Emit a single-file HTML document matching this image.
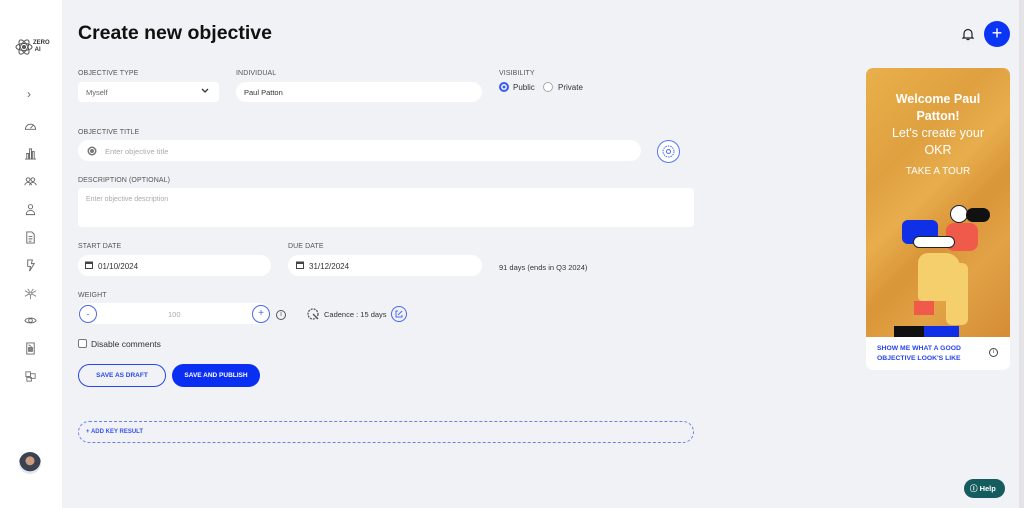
<!DOCTYPE html>
<html><head><meta charset="utf-8"><style>
*{margin:0;padding:0;box-sizing:border-box}
body{width:1024px;height:508px;overflow:hidden;background:#f1f2f5;font-family:"Liberation Sans",sans-serif;position:relative;color:#333}
.a{position:absolute}
.side{left:0;top:0;width:62px;height:508px;background:#fff}
.lbl{font-size:7px;color:#555;letter-spacing:.1px}
.box{background:#fff;border-radius:11px}
.t{font-size:8px;color:#333}
.ph{font-size:7.5px;color:#aaa}
.ic{position:absolute;left:24px;width:13px;height:13px}
</style></head><body>
<div class="a side">
  <svg class="a" style="left:15px;top:38px" width="18" height="18" viewBox="0 0 18 18" fill="none" stroke="#555" stroke-width="1"><ellipse cx="9" cy="9" rx="8" ry="3.5"/><ellipse cx="9" cy="9" rx="8" ry="3.5" transform="rotate(60 9 9)"/><ellipse cx="9" cy="9" rx="8" ry="3.5" transform="rotate(-60 9 9)"/><circle cx="9" cy="9" r="1.5" fill="#555"/></svg>
  <div class="a" style="left:33px;top:40px;font-size:6px;font-weight:bold;line-height:7px;color:#333">ZERO<br>&nbsp;AI</div>
  <div class="a" style="left:27px;top:87px;font-size:12px;color:#666">›</div>
  <svg class="ic" style="top:120px" viewBox="0 0 14 14" fill="none" stroke="#666"><path d="M1.5 10a5.5 5.5 0 0 1 11 0z"/><path d="M7 9l2.5-3"/></svg>
  <svg class="ic" style="top:147px" viewBox="0 0 14 14" fill="none" stroke="#666"><path d="M1 13h12M3 13V7h2v6M6 13V2h2v11M9 13V5h2v8"/></svg>
  <svg class="ic" style="top:175px" viewBox="0 0 14 14" fill="none" stroke="#666"><circle cx="4.5" cy="5" r="2"/><circle cx="9.5" cy="5" r="2"/><path d="M1 11c0-2 2-3 3.5-3s3.5 1 3.5 3M6 11c0-2 2-3 3.5-3S13 9 13 11"/></svg>
  <svg class="ic" style="top:203px" viewBox="0 0 14 14" fill="none" stroke="#666"><circle cx="7" cy="4" r="2.3"/><path d="M2.5 12.5c0-3 2-4.5 4.5-4.5s4.5 1.5 4.5 4.5z"/></svg>
  <svg class="ic" style="top:231px" viewBox="0 0 14 14" fill="none" stroke="#666"><path d="M3 1h5.5L11 3.5V13H3z M5 6h4M5 8.5h4M5 11h3"/></svg>
  <svg class="ic" style="top:259px" viewBox="0 0 14 14" fill="none" stroke="#666"><path d="M4 1h5L8 5h3L6 13l1-5H4z"/></svg>
  <svg class="ic" style="top:287px" viewBox="0 0 14 14" fill="none" stroke="#888"><circle cx="7" cy="7" r="1.5"/><path d="M1 4l4.5 2.5M13 4L8.5 6.5M1 10l4.5-2.5M13 10L8.5 7.5M7 8.5V13M4 2l2 3M10 2L8 5"/></svg>
  <svg class="ic" style="top:314px" viewBox="0 0 14 14" fill="none" stroke="#666"><path d="M1 7c2-3.5 10-3.5 12 0c-2 3.5-10 3.5-12 0z"/><circle cx="7" cy="7" r="2"/></svg>
  <svg class="ic" style="top:342px" viewBox="0 0 14 14" fill="none" stroke="#666"><path d="M3 1h8v12H3z"/><rect x="5" y="6" width="4" height="4" fill="#888"/><path d="M5 3l3 2"/></svg>
  <svg class="ic" style="top:370px" viewBox="0 0 14 14" fill="none" stroke="#777"><rect x="2" y="2" width="5" height="5"/><rect x="7" y="4" width="5" height="5"/><rect x="3" y="8" width="5" height="4"/></svg>
  <div class="a" style="left:19px;top:452px;width:22px;height:22px;border-radius:50%;background:radial-gradient(circle at 50% 40%,#c99a80 0 25%,#3a4150 27% 60%,#dfe6ee 62%)"></div>
</div>

<div class="a" style="left:78px;top:22px;font-size:19.5px;font-weight:bold;color:#111">Create new objective</div>
<svg class="a" style="left:961px;top:27px" width="14" height="14" viewBox="0 0 14 14" fill="none" stroke="#222" stroke-width="1.2"><path d="M3 10V6.5a4 4 0 0 1 8 0V10l1 1H2z M5.5 12.5h3"/></svg>
<div class="a" style="left:984px;top:21px;width:26px;height:26px;border-radius:50%;background:#0b35f5;color:#fff;font-size:18px;text-align:center;line-height:25px">+</div>

<div class="a lbl" style="left:78px;top:70px">OBJECTIVE TYPE</div>
<div class="a box" style="left:78px;top:82px;width:141px;height:20px;border-radius:4px"></div>
<div class="a t" style="left:86px;top:88px;font-size:7.5px;color:#666">Myself</div>
<svg class="a" style="left:201px;top:88px" width="8" height="6" viewBox="0 0 8 6" fill="none" stroke="#333" stroke-width="1.3"><path d="M1 1l3 3 3-3"/></svg>
<div class="a lbl" style="left:236px;top:70px">INDIVIDUAL</div>
<div class="a box" style="left:236px;top:82px;width:246px;height:20px"></div>
<div class="a t" style="left:244px;top:88px;font-size:7.5px">Paul Patton</div>
<div class="a lbl" style="left:499px;top:70px">VISIBILITY</div>
<div class="a" style="left:499px;top:82px;width:10px;height:10px;border-radius:50%;background:#3b5cf5;border:2px solid #3b5cf5;box-shadow:inset 0 0 0 1.5px #fff"></div>
<div class="a t" style="left:513px;top:83px">Public</div>
<div class="a" style="left:543px;top:82px;width:10px;height:10px;border-radius:50%;border:1px solid #aaa;background:#fff"></div>
<div class="a t" style="left:558px;top:83px">Private</div>

<div class="a lbl" style="left:78px;top:129px">OBJECTIVE TITLE</div>
<div class="a box" style="left:78px;top:140px;width:563px;height:21px"></div>
<svg class="a" style="left:87px;top:146px" width="10" height="10" viewBox="0 0 10 10"><circle cx="5" cy="5" r="4.5" fill="#777"/><circle cx="5" cy="5" r="2.5" fill="none" stroke="#fff"/></svg>
<div class="a ph" style="left:105px;top:147px">Enter objective title</div>
<div class="a" style="left:657px;top:140px;width:23px;height:23px;border-radius:50%;border:1px solid #5a75f5;background:#fff"></div>
<svg class="a" style="left:662px;top:145px" width="13" height="13" viewBox="0 0 13 13" fill="none" stroke="#4a66f0"><circle cx="6.5" cy="6.5" r="5.5" stroke-dasharray="1.5 1"/><circle cx="6.5" cy="6.5" r="2"/></svg>

<div class="a lbl" style="left:78px;top:177px">DESCRIPTION (OPTIONAL)</div>
<div class="a box" style="left:78px;top:188px;width:616px;height:39px;border-radius:4px"></div>
<div class="a ph" style="left:86px;top:196px;font-size:7px">Enter objective description</div>

<div class="a lbl" style="left:78px;top:243px">START DATE</div>
<div class="a box" style="left:78px;top:255px;width:193px;height:21px"></div>
<svg class="a" style="left:85px;top:261px" width="8" height="8" viewBox="0 0 8 8"><rect x="0.5" y="1" width="7" height="6.5" fill="none" stroke="#444"/><rect x="0.5" y="1" width="7" height="2" fill="#444"/></svg>
<div class="a t" style="left:98px;top:262px">01/10/2024</div>
<div class="a lbl" style="left:288px;top:243px">DUE DATE</div>
<div class="a box" style="left:288px;top:255px;width:194px;height:21px"></div>
<svg class="a" style="left:296px;top:261px" width="8" height="8" viewBox="0 0 8 8"><rect x="0.5" y="1" width="7" height="6.5" fill="none" stroke="#444"/><rect x="0.5" y="1" width="7" height="2" fill="#444"/></svg>
<div class="a t" style="left:309px;top:262px">31/12/2024</div>
<div class="a t" style="left:499px;top:263px;font-size:7.5px">91 days (ends in Q3 2024)</div>

<div class="a lbl" style="left:78px;top:292px">WEIGHT</div>
<div class="a box" style="left:78px;top:303px;width:192px;height:21px"></div>
<div class="a" style="left:79px;top:305px;width:18px;height:18px;border-radius:50%;border:1px solid #4a66f0;color:#4a66f0;font-size:9px;text-align:center;line-height:16px">-</div>
<div class="a ph" style="left:168px;top:310px">100</div>
<div class="a" style="left:252px;top:305px;width:18px;height:18px;border-radius:50%;border:1px solid #4a66f0;color:#4a66f0;font-size:10px;text-align:center;line-height:16px">+</div>
<div class="a" style="left:276px;top:310px;width:10px;height:10px;border-radius:50%;border:1px solid #555;font-size:7px;text-align:center;line-height:8px;color:#555">i</div>
<svg class="a" style="left:307px;top:308px" width="13" height="13" viewBox="0 0 13 13" fill="none" stroke="#555" stroke-width="1.3"><circle cx="6" cy="6" r="5" stroke-dasharray="2 1"/><path d="M6 6l5 5"/></svg>
<div class="a t" style="left:324px;top:310px;font-size:7.5px">Cadence : 15 days</div>
<div class="a" style="left:391px;top:306px;width:16px;height:16px;border-radius:50%;border:1px solid #4a66f0"></div>
<svg class="a" style="left:395px;top:310px" width="8" height="8" viewBox="0 0 8 8" fill="none" stroke="#4a66f0"><path d="M3 1H1v6h6V5M3 5l4-4"/></svg>

<div class="a" style="left:78px;top:339px;width:9px;height:9px;border:1px solid #777;border-radius:2px;background:#fff"></div>
<div class="a" style="left:91px;top:339px;font-size:8.5px;color:#333">Disable comments</div>

<div class="a" style="left:78px;top:364px;width:88px;height:23px;border-radius:12px;border:1.2px solid #2748f0;color:#2748f0;font-size:6.5px;font-weight:bold;text-align:center;line-height:21px">SAVE AS DRAFT</div>
<div class="a" style="left:172px;top:364px;width:88px;height:23px;border-radius:12px;background:#0a2ff2;color:#fff;font-size:6.5px;font-weight:bold;text-align:center;line-height:23px">SAVE AND PUBLISH</div>

<div class="a" style="left:78px;top:421px;width:616px;height:22px;border-radius:11px;border:1px dashed #6a80f0"></div>
<div class="a" style="left:86px;top:429px;font-size:6px;font-weight:bold;color:#3553ee">+ ADD KEY RESULT</div>

<div class="a" style="left:866px;top:68px;width:144px;height:302px;border-radius:7px;background:#fff;overflow:hidden">
  <div class="a" style="left:0;top:0;width:144px;height:269px;background:linear-gradient(135deg,#e8b04a 0%,#dfa040 30%,#e8ad4c 45%,#d99538 60%,#e2a246 75%,#d58c34 100%)"></div>
  <div class="a" style="left:0;top:23px;width:144px;text-align:center;color:#fff;font-size:12.5px;line-height:17px"><b>Welcome Paul<br>Patton!</b><br>Let's create your<br>OKR</div>
  <div class="a" style="left:0;top:98px;width:144px;text-align:center;color:#fff;font-size:10px">TAKE A TOUR</div>
  <div class="a" style="left:36px;top:152px;width:36px;height:24px;background:#1030e8;border-radius:6px"></div>
  <div class="a" style="left:84px;top:137px;width:18px;height:18px;border-radius:50%;background:#fff;border:1px solid #222"></div>
  <div class="a" style="left:100px;top:140px;width:24px;height:14px;border-radius:7px;background:#111"></div>
  <div class="a" style="left:80px;top:155px;width:32px;height:28px;background:#f05a4a;border-radius:8px"></div>
  <div class="a" style="left:47px;top:168px;width:42px;height:12px;background:#fff;border:1px solid #222;border-radius:6px"></div>
  <div class="a" style="left:52px;top:185px;width:42px;height:48px;background:#f5cf6c;border-radius:10px 14px 4px 4px"></div>
  <div class="a" style="left:80px;top:195px;width:22px;height:62px;background:#f5cf6c;border-radius:6px"></div>
  <div class="a" style="left:48px;top:233px;width:20px;height:14px;background:#f05a4a"></div>
  <div class="a" style="left:28px;top:258px;width:65px;height:11px;background:#1030e8"></div>
  <div class="a" style="left:28px;top:258px;width:30px;height:11px;background:#111"></div>
  <div class="a" style="left:11px;top:276px;font-size:6.8px;font-weight:bold;color:#2744ee;line-height:10px">SHOW ME WHAT A GOOD<br>OBJECTIVE LOOK'S LIKE</div>
  <div class="a" style="left:123px;top:280px;width:9px;height:9px;border-radius:50%;border:1px solid #444;font-size:6px;text-align:center;line-height:7px;color:#444">i</div>
</div>
<div class="a" style="left:1019px;top:0;width:5px;height:508px;background:#e4e4e6"></div>

<div class="a" style="left:964px;top:479px;width:41px;height:19px;border-radius:10px;background:#155c5e;color:#fff;font-size:7.5px;font-weight:bold;line-height:19px;padding-left:6px">&#9432; Help</div>
</body></html>
